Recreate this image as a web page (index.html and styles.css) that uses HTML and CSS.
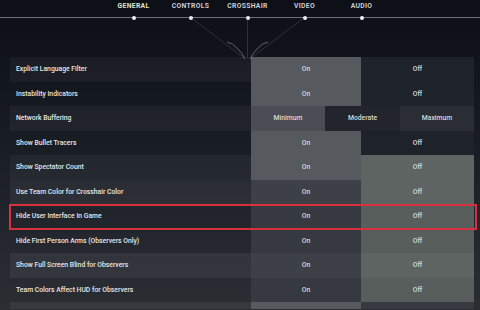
FILE: index.html
```html
<!DOCTYPE html>
<html lang="en">
  <head>
    <meta charset="utf-8">
    <title>Settings - General</title>
    <link rel="stylesheet" href="styles.css">
  </head>
  <body>

    <div class="nav">
      <div class="tab active">GENERAL<span class="dot"></span></div>
      <div class="tab">CONTROLS<span class="dot"></span></div>
      <div class="tab">CROSSHAIR<span class="dot"></span></div>
      <div class="tab">VIDEO<span class="dot"></span></div>
      <div class="tab">AUDIO<span class="dot"></span></div>
    </div>

    <!-- lines from the tabs down to the list -->
    <svg class="deco" width="480" height="62" viewBox="0 0 480 62">
      <g stroke="#8a8f99" stroke-opacity="0.35" fill="none" stroke-width="0.7">
        <line x1="190" y1="17" x2="244" y2="58"/>
        <line x1="305" y1="17" x2="251" y2="58"/>
        <line x1="247.5" y1="17" x2="247.5" y2="58"/>
      </g>
      <g stroke="#c8ccd2" stroke-opacity="0.55" fill="none" stroke-width="0.8">
        <path d="M227 42 Q233 43 238 49 Q243 54 245 59"/>
        <path d="M268 42 Q262 43 257 49 Q252 54 250 59"/>
      </g>
    </svg>

    <div class="list">
      <div class="row odd">
        <div class="label">Explicit Language Filter</div>
        <div class="cell sel">On</div>
        <div class="cell dim">Off</div>
      </div>
      <div class="row">
        <div class="label">Instability Indicators</div>
        <div class="cell sel">On</div>
        <div class="cell dim">Off</div>
      </div>
      <div class="row odd three">
        <div class="label">Network Buffering</div>
        <div class="cell mid">Minimum</div>
        <div class="cell dark">Moderate</div>
        <div class="cell dim2">Maximum</div>
      </div>
      <div class="row">
        <div class="label">Show Bullet Tracers</div>
        <div class="cell sel">On</div>
        <div class="cell dim">Off</div>
      </div>
      <div class="row odd">
        <div class="label">Show Spectator Count</div>
        <div class="cell sel">On</div>
        <div class="cell green">Off</div>
      </div>
      <div class="row odd low">
        <div class="label">Use Team Color for Crosshair Color</div>
        <div class="cell soft">On</div>
        <div class="cell green">Off</div>
      </div>
      <div class="row low marked">
        <div class="label">Hide User Interface In Game</div>
        <div class="cell soft2">On</div>
        <div class="cell green2">Off</div>
      </div>
      <div class="row low">
        <div class="label">Hide First Person Arms (Observers Only)</div>
        <div class="cell soft2">On</div>
        <div class="cell green2">Off</div>
      </div>
      <div class="row odd low">
        <div class="label">Show Full Screen Blind for Observers</div>
        <div class="cell soft">On</div>
        <div class="cell green">Off</div>
      </div>
      <div class="row low">
        <div class="label">Team Colors Affect HUD for Observers</div>
        <div class="cell soft2">On</div>
        <div class="cell green2">Off</div>
      </div>
      <div class="row odd low stub">
        <div class="label"></div>
        <div class="cell sel"></div>
        <div class="cell soft2"></div>
      </div>
    </div>

  </body>
</html>
```

FILE: styles.css
```css
* {
  box-sizing: border-box;
}

body {
  margin: 0;
  width: 480px;
  height: 310px;
  overflow: hidden;
  position: relative;
  font-family: Roboto, "Liberation Sans", sans-serif;
  color: #dcdcdc;
  background: linear-gradient(180deg, #0c0f16 0px, #10141b 60px, #1a1e25 160px, #262a30 260px, #2a2e33 310px);
}

/* top tabs */
.nav {
  display: flex;
  justify-content: center;
  padding-left: 15px;
  height: 18px;
  border-bottom: 1px solid #6d717a;
}

.tab {
  position: relative;
  width: 57px;
  text-align: center;
  font-size: 6.8px;
  font-weight: 700;
  letter-spacing: 0.3px;
  color: #c9ccd2;
  padding-top: 2px;
}

.tab.active {
  color: #e4e2c4;
}

.tab .dot {
  position: absolute;
  left: 50%;
  bottom: -2.5px;
  width: 4px;
  height: 4px;
  margin-left: -2px;
  border-radius: 50%;
  background: #f2f2f2;
}

.deco {
  position: absolute;
  top: 0;
  left: 0;
}

/* settings rows */
.list {
  margin: 39px 6px 0 10px;
}

.row {
  display: grid;
  grid-template-columns: 241px 110px 113px;
  height: 24.5px;
  font-size: 6.8px;
  font-weight: 500;
}

.row.three {
  grid-template-columns: 241px 74px 75px 74px;
}

.row.stub {
  height: 7px;
}

.row.odd {
  background: rgba(255, 255, 255, 0.045);
}

.row.odd.low {
  background: rgba(255, 255, 255, 0.06);
}

.label {
  display: flex;
  align-items: center;
  padding-left: 6px;
  color: #e6e6e6;
}

.cell {
  display: flex;
  align-items: center;
  justify-content: center;
  color: #d8d8d8;
}

.sel { background: #56595e; }
.dim { background: #1e2229; }
.mid { background: #4a4e54; }
.dark { background: #22262c; }
.dim2 { background: #2a2e34; }
.soft { background: #3d4147; }
.soft2 { background: #363a40; }
.green { background: #5d6461; }
.green2 { background: #575e5c; }

.row.marked {
  position: relative;
}

.row.marked::after {
  content: "";
  position: absolute;
  left: -1px;
  right: -3px;
  top: 0;
  bottom: -1px;
  border: 2.5px solid #d8303e;
}
```
